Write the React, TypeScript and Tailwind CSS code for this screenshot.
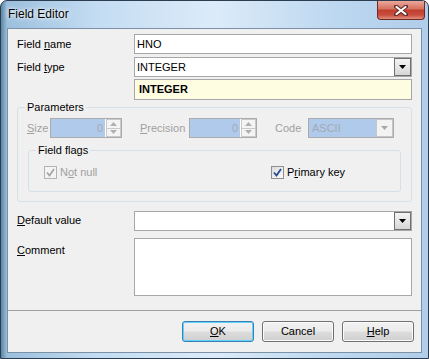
import React from 'react'

const ff = "font-['Liberation_Sans',Arial,sans-serif]"

function Acc({ text, at }: { text: string; at: number }) {
  return (
    <>
      {text.slice(0, at)}
      <span className="underline underline-offset-[1px]">{text[at]}</span>
      {text.slice(at + 1)}
    </>
  )
}

function Arrow({ up, color }: { up?: boolean; color: string }) {
  return (
    <svg width="7" height="4" viewBox="0 0 7 4">
      <path d={up ? 'M0 4h7L3.5 0z' : 'M0 0h7L3.5 4z'} fill={color} />
    </svg>
  )
}

function DropButton({ disabled }: { disabled?: boolean }) {
  return (
    <div
      className={`w-[17px] h-full flex items-center justify-center border ${
        disabled
          ? 'border-[#c6c6c6] bg-[#f3f3f3]'
          : 'border-[#707070] bg-[linear-gradient(#f4f4f4,#e6e6e6_50%,#d6d6d6)]'
      }`}
    >
      <Arrow color={disabled ? '#a7a7a7' : '#000'} />
    </div>
  )
}

function TextBox({ value, className = '' }: { value?: string; className?: string }) {
  return (
    <div className={`h-[20px] border border-[#a7a7a7] bg-white flex items-center pl-[2px] ${className}`}>
      {value}
    </div>
  )
}

function Combo({ value, className = '' }: { value?: string; className?: string }) {
  return (
    <div className={`h-[20px] border border-[#a7a7a7] bg-white flex items-stretch ${className}`}>
      <div className="flex-1 flex items-center pl-[2px]">{value}</div>
      <DropButton />
    </div>
  )
}

function SpinDisabled({ value, className = '' }: { value: string; className?: string }) {
  return (
    <div className={`h-[20px] border border-[#ababab] bg-[#afcaea] flex items-stretch ${className}`}>
      <div className="flex-1 flex items-center justify-end pr-[2px] text-[#a3aab3]">{value}</div>
      <div className="w-[16px] flex flex-col border-l border-white">
        <div className="flex-1 flex items-center justify-center border border-[#c9c9c9] bg-[#f4f4f4]">
          <Arrow up color="#b0b0b0" />
        </div>
        <div className="flex-1 flex items-center justify-center border border-t-0 border-[#c9c9c9] bg-[#f4f4f4]">
          <Arrow color="#b0b0b0" />
        </div>
      </div>
    </div>
  )
}

function CheckBox({ disabled }: { disabled?: boolean }) {
  return (
    <div
      className={`w-[13px] h-[13px] border flex items-center justify-center ${
        disabled ? 'border-[#b3b3b3] bg-[#f4f4f4]' : 'border-[#8e8f8f] bg-[linear-gradient(135deg,#dcdcdc,#fbfbfb)]'
      }`}
    >
      <svg width="9" height="9" viewBox="0 0 9 9">
        <path
          d="M1 4.5L3.5 7.5L8 1"
          fill="none"
          stroke={disabled ? '#a6a6a6' : '#264a8e'}
          strokeWidth="1.8"
        />
      </svg>
    </div>
  )
}

function Button({ children, isDefault }: { children: React.ReactNode; isDefault?: boolean }) {
  return (
    <div
      className={`w-[72px] h-[21px] rounded-[3px] border flex items-center justify-center bg-[linear-gradient(#f2f2f2,#ebebeb_48%,#dddddd_52%,#cfcfcf)] ${
        isDefault ? 'border-[#3c7fb1] shadow-[inset_0_0_0_1px_#5fd3fb]' : 'border-[#707070] shadow-[inset_0_0_0_1px_#fbfbfb]'
      }`}
    >
      {children}
    </div>
  )
}

export default function App() {
  return (
    <div className={`w-[429px] h-[359px] ${ff} text-[11px] text-black`}>
      <div className="w-full h-full rounded-t-[7px] border border-[#2c3d50] bg-[linear-gradient(90deg,#5a86a2_0px,#9bbfdd_6px,#c3dcf2_22%,#dcebf9_50%,#bdd8f0_78%,#b0cde9_100%)] flex flex-col">
        <div className="h-[27px] flex items-start justify-between">
          <div className="pl-[7px] pt-[6px] text-[12px] leading-[15px] text-black [text-shadow:0_0_6px_#fff,0_0_3px_#fff]">
            Field Editor
          </div>
          <div className="mr-[3px] w-[48px] h-[19px] rounded-b-[4px] border border-t-0 border-[#6e2a22] bg-[linear-gradient(#eba79c,#d77462_42%,#c23f2f_52%,#c84e3f_78%,#e0917f)] flex items-center justify-center">
            <svg width="14" height="11" viewBox="0 0 14 11">
              <path d="M2 1.5L12 9.5M12 1.5L2 9.5" stroke="#5a2b26" strokeWidth="4" strokeLinecap="round" />
              <path d="M2.5 2L11.5 9M11.5 2L2.5 9" stroke="#fff" strokeWidth="2.2" strokeLinecap="round" />
            </svg>
          </div>
        </div>

        <div className="mx-[6px] h-[325px] border border-[#7d91a6] bg-[#f0f0f0] flex flex-col pl-[9px] pt-[5px]">
          <div className="flex items-center">
            <div className="w-[117px]"><Acc text="Field name" at={6} /></div>
            <TextBox value="HNO" className="w-[278px]" />
          </div>
          <div className="flex items-center mt-[3px]">
            <div className="w-[117px]"><Acc text="Field type" at={6} /></div>
            <Combo value="INTEGER" className="w-[278px]" />
          </div>
          <div className="flex mt-[2px]">
            <div className="w-[117px]" />
            <div className="w-[278px] h-[21px] border border-[#a7a7a7] bg-[#fefde2] flex items-center pl-[4px] font-bold">
              INTEGER
            </div>
          </div>

          <fieldset className="mt-[1px] w-[395px] border border-[#d5dfe5] rounded-[3px]">
            <legend className="ml-[7px] px-[2px] leading-[13px]">Parameters</legend>
            <div className="pt-[4px] pb-[9px]">
              <div className="flex items-center pl-[9px] text-[#a0a0a0]">
                <div className="w-[23px]"><Acc text="Size" at={0} /></div>
                <SpinDisabled value="0" className="w-[72px]" />
                <div className="ml-[18px] w-[49px]"><Acc text="Precision" at={0} /></div>
                <SpinDisabled value="0" className="w-[68px]" />
                <div className="ml-[18px] w-[33px]">Code</div>
                <div className="w-[86px] h-[20px] border border-[#ababab] bg-[#afcaea] flex items-stretch">
                  <div className="flex-1 flex items-center pl-[3px] text-[#a3aab3]">ASCII</div>
                  <DropButton disabled />
                </div>
              </div>

              <fieldset className="mt-[6px] ml-[10px] w-[373px] border border-[#d5dfe5] rounded-[3px]">
                <legend className="ml-[7px] px-[2px] leading-[13px]">Field flags</legend>
                <div className="pt-[7px] pb-[10px] pl-[15px] flex items-center">
                  <div className="w-[227px] flex items-center gap-[3px] text-[#a0a0a0]">
                    <CheckBox disabled />
                    <span><Acc text="Not null" at={1} /></span>
                  </div>
                  <div className="flex items-center gap-[3px]">
                    <CheckBox />
                    <span><Acc text="Primary key" at={1} /></span>
                  </div>
                </div>
              </fieldset>
            </div>
          </fieldset>

          <div className="flex items-center mt-[9px]">
            <div className="w-[117px]"><Acc text="Default value" at={0} /></div>
            <Combo className="w-[278px]" />
          </div>
          <div className="flex items-start mt-[7px]">
            <div className="w-[117px] pt-[4px]"><Acc text="Comment" at={0} /></div>
            <div className="w-[278px] h-[58px] border border-[#a7a7a7] bg-white" />
          </div>

          <div className="mt-[14px] -ml-[9px] border-t border-[#a0a0a0]" />

          <div className="mt-[10px] flex justify-end gap-[8px] pr-[7px]">
            <Button isDefault><Acc text="OK" at={0} /></Button>
            <Button>Cancel</Button>
            <Button><Acc text="Help" at={0} /></Button>
          </div>
        </div>
      </div>
    </div>
  )
}
